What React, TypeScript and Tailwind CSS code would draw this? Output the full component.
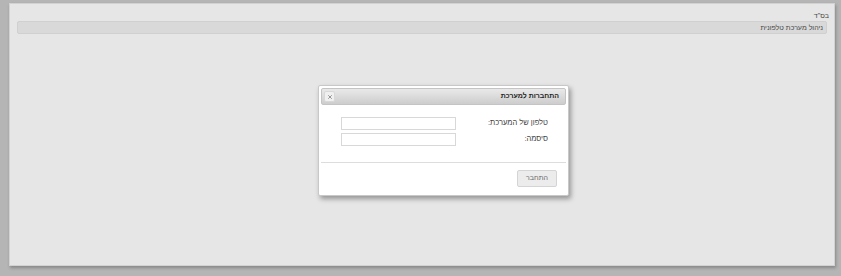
import { X } from 'lucide-react';

export default function App() {
  return (
    <div
      dir="rtl"
      className="relative w-[841px] h-[276px] overflow-hidden bg-[#b5b5b5] text-[7px] text-[#333]"
      style={{ fontFamily: '"Liberation Sans", Arial, sans-serif' }}
    >
      {/* main panel */}
      <div className="absolute left-[9px] top-[3px] w-[826px] h-[263px] bg-[#e6e6e6] border border-[#d2d2d2] shadow-[1px_2px_3px_rgba(0,0,0,0.25)]">
        <div className="px-[7px] pt-[6px]">
          <div className="h-[11px] leading-[11px] -mr-[2px] text-[#444]">בס"ד</div>
          <div className="h-[13px] leading-[12px] bg-[#d9d9d9] border border-[#d0d0d0] rounded-[2px] px-[3px] text-[#444]">
            ניהול מערכת טלפונית
          </div>
        </div>
      </div>

      {/* login dialog */}
      <div className="absolute left-[318px] top-[85px] w-[251px] h-[111px] bg-white border border-[#c8c8c8] rounded-[2px] shadow-[2px_3px_5px_rgba(0,0,0,0.35)] p-[2px] flex flex-col">
        <div className="h-[17px] flex items-center justify-between px-[6px] rounded-[2px] border border-[#c4c4c4] bg-gradient-to-b from-[#e9e9e9] to-[#cdcdcd]">
          <span className="font-bold text-[#222]">התחברות למערכת</span>
          <span className="w-[11px] h-[11px] -ml-[4px] flex items-center justify-center rounded-[2px] bg-[#f0f0f0] border border-[#d8d8d8]">
            <X size={6} strokeWidth={3} className="text-[#777]" />
          </span>
        </div>

        <div className="flex-1 pt-[10px] pr-[18px] text-[7.5px] text-[#444]">
          <div className="flex items-center h-[16px]">
            <span className="w-[92px]">טלפון של המערכת:</span>
            <input className="w-[115px] h-[13px] border border-[#d8d8d8] bg-white outline-none" />
          </div>
          <div className="flex items-center h-[16px]">
            <span className="w-[92px]">סיסמה:</span>
            <input type="password" className="w-[115px] h-[13px] border border-[#d8d8d8] bg-white outline-none" />
          </div>
        </div>

        <div className="border-t border-[#ddd] h-[31px] flex items-center pr-[9px]">
          <button className="w-[40px] h-[17px] rounded-[2px] border border-[#d4d4d4] bg-[#ececec] text-[#666] text-[7px]">
            התחבר
          </button>
        </div>
      </div>
    </div>
  );
}
